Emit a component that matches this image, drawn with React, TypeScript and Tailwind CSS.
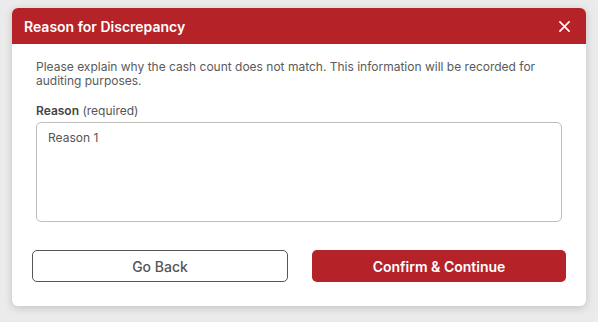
import React from "react";

export default function App() {
  return (
    <div className="w-[598px] h-[322px] bg-[#ebebeb] pt-[8px] pl-[12px]" style={{ fontFamily: "Inter, 'Noto Sans', sans-serif" }}>
      <div className="w-[574px] bg-white rounded-[6px] overflow-hidden shadow-[0_2px_8px_rgba(0,0,0,0.18)]">
        <div className="h-[36px] bg-[#b52329] flex items-center justify-between pl-[12px] pr-[16px]">
          <span className="text-white font-semibold text-[14px]">Reason for Discrepancy</span>
          <svg width="11" height="11" viewBox="0 0 12 12" fill="none">
            <path d="M1 1L11 11M11 1L1 11" stroke="white" strokeWidth="1.8" strokeLinecap="round" />
          </svg>
        </div>
        <div className="px-[24px] pt-[16px]">
          <p className="text-[12px] leading-[14px] text-[#5a5a5a]">
            Please explain why the cash count does not match. This information will be recorded for auditing purposes.
          </p>
          <div className="mt-[15px] text-[12px] leading-[15px] text-[#555]">
            <span className="font-semibold text-[#444]">Reason</span> (required)
          </div>
          <div className="mt-[4px] h-[100px] border border-[#bdbdbd] rounded-[5px] px-[11px] pt-[6px] text-[12px] text-[#555]">
            Reason 1
          </div>
        </div>
        <div className="flex gap-[24px] px-[20px] pt-[28px] pb-[24px]">
          <button className="flex-1 h-[32px] border border-[#555] rounded-[5px] text-[14px] font-medium text-[#555] bg-white">
            Go Back
          </button>
          <button className="flex-1 h-[32px] rounded-[5px] text-[14px] font-semibold text-white bg-[#b52329]">
            Confirm &amp; Continue
          </button>
        </div>
      </div>
    </div>
  );
}
